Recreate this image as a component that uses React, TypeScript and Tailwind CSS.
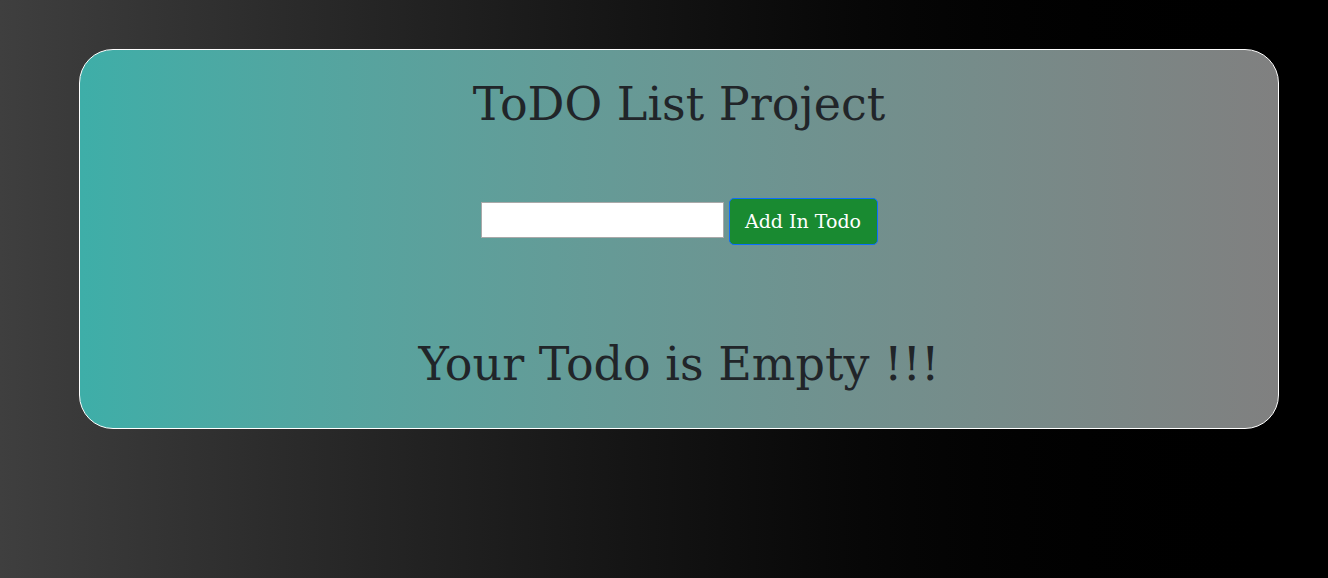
export default function App() {
  return (
    <div className="w-[1328px] h-[578px] bg-gradient-to-r from-[#3f3f3f] to-[#000000] pt-[49px]" style={{ fontFamily: '"DejaVu Serif", serif' }}>
      <div className="ml-[79px] w-[1200px] h-[380px] rounded-[34px] border border-white bg-gradient-to-r from-[#3eaea8] to-[#808080] flex flex-col items-center text-[#212529]">
        <h1 className="mt-[24px] text-[46px] leading-[60px]">ToDO List Project</h1>
        <div className="mt-[64px] flex items-center gap-[5px]">
          <input className="w-[243px] h-[36px] -mt-[3px] bg-white border border-[#a9a9a9] outline-none" />
          <button className="w-[149px] h-[47px] bg-[#198a31] border border-[#0d6efd] rounded-[5px] text-white text-[19px]">Add In Todo</button>
        </div>
        <h2 className="mt-[89px] text-[46px] leading-[60px]">Your Todo is Empty !!!</h2>
      </div>
    </div>
  );
}
